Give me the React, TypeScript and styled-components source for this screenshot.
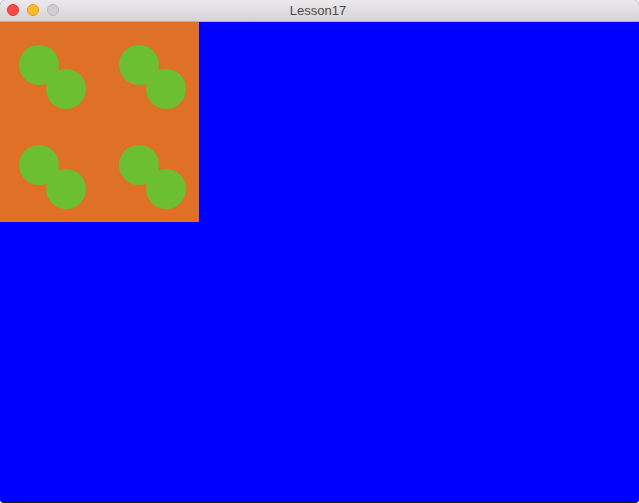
import React from "react";
import styled, { createGlobalStyle } from "styled-components";

const Global = createGlobalStyle`
  html, body { margin: 0; padding: 0; background: #ffffff; overflow: hidden; }
  #root { width: 639px; height: 503px; }
`;

const Window = styled.div`
  width: 639px;
  height: 503px;
  display: flex;
  flex-direction: column;
  border-radius: 5px 5px 4px 4px;
  overflow: hidden;
  box-sizing: border-box;
  border-bottom: 1px solid #1a1a1a;
  background: #0000ff;
`;

const TitleBar = styled.div`
  height: 22px;
  flex: 0 0 22px;
  box-sizing: border-box;
  position: relative;
  display: flex;
  align-items: center;
  justify-content: center;
  background: linear-gradient(#ebe9eb, #d5d3d5);
  border-bottom: 1px solid #b3b1b3;
`;

const Lights = styled.div`
  position: absolute;
  left: 7px;
  top: 4px;
  display: flex;
  gap: 8px;
`;

const Light = styled.span<{ $fill: string; $edge: string }>`
  width: 12px;
  height: 12px;
  border-radius: 50%;
  box-sizing: border-box;
  background: ${(p) => p.$fill};
  border: 1px solid ${(p) => p.$edge};
`;

const Title = styled.span`
  font-family: "Liberation Sans", Arial, sans-serif;
  font-size: 13px;
  color: #4a4a4a;
  margin-right: 3px;
`;

const Content = styled.div`
  flex: 1;
  background: #0000ff;
  display: flex;
  align-items: flex-start;
`;

const Canvas = styled.div`
  width: 199px;
  height: 200px;
  background: #df7127;
  display: grid;
  grid-template-columns: 100px 99px;
  grid-template-rows: 100px 100px;
  overflow: hidden;
`;

const Cell = styled.div`
  width: 100px;
  height: 100px;
`;

const Pair = () => (
  <svg width="100" height="100" viewBox="0 0 100 100">
    <circle cx="39" cy="43" r="20" fill="#6bbf30" />
    <circle cx="66" cy="67" r="20" fill="#6bbf30" />
  </svg>
);

export default function App() {
  return (
    <>
      <Global />
      <Window>
        <TitleBar>
          <Lights>
            <Light $fill="#fc4a44" $edge="#e0332d" />
            <Light $fill="#fdbb2a" $edge="#df9c1a" />
            <Light $fill="#d0ced0" $edge="#b9b7b9" />
          </Lights>
          <Title>Lesson17</Title>
        </TitleBar>
        <Content>
          <Canvas>
            {[0, 1, 2, 3].map((i) => (
              <Cell key={i}>
                <Pair />
              </Cell>
            ))}
          </Canvas>
        </Content>
      </Window>
    </>
  );
}
